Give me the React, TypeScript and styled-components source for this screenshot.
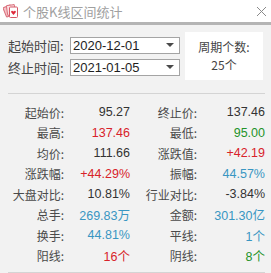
import React from "react";
import styled, { createGlobalStyle } from "styled-components";

const GlobalStyle = createGlobalStyle`
  html, body {
    margin: 0;
    padding: 0;
    background: #f2f2f2;
  }
  body {
    width: 271px;
    height: 273px;
    overflow: hidden;
    font-family: "Liberation Sans", "Noto Sans CJK SC", sans-serif;
  }
`;

const Window = styled.div`
  width: 271px;
  height: 273px;
  background: #f2f2f2;
`;

const TitleBar = styled.div`
  height: 22px;
  display: flex;
  align-items: center;
  padding: 0 4px 0 3px;
  background: #ffffff;
  border-bottom: 3px solid #b4b4b4;
`;

const Title = styled.span`
  margin-left: 4px;
  flex: 1;
  font-family: "Noto Sans CJK SC", sans-serif;
  font-size: 13px;
  color: #a0a0a0;
`;

const TopSection = styled.div`
  display: flex;
  align-items: center;
  padding: 7px 8px 0 8px;
`;

const DateColumn = styled.div`
  display: flex;
  flex-direction: column;
  gap: 5px;
`;

const DateRow = styled.div`
  display: flex;
  align-items: center;
`;

const DateLabel = styled.span`
  width: 62px;
  font-family: "Noto Sans CJK SC", sans-serif;
  font-size: 13px;
  color: #444444;
  line-height: 17px;
`;

const Combo = styled.div`
  width: 101px;
  height: 15px;
  display: flex;
  align-items: center;
  justify-content: space-between;
  padding: 0 5px 0 2px;
  background: #ffffff;
  border: 1px solid #a4a4a4;
  font-size: 13px;
  color: #1e1e1e;
`;

const Arrow = styled.span`
  width: 0;
  height: 0;
  border-left: 4px solid transparent;
  border-right: 4px solid transparent;
  border-top: 4px solid #4a4a4a;
`;

const CountBox = styled.div`
  margin-left: 5px;
  width: 80px;
  height: 48px;
  display: flex;
  flex-direction: column;
  align-items: center;
  justify-content: center;
  background: #ffffff;
  font-family: "Noto Sans CJK SC", sans-serif;
  font-size: 12px;
  line-height: 18px;
  color: #444444;
`;

const Divider = styled.div<{ $top: number }>`
  margin: ${(p) => p.$top}px 6px 0 8px;
  height: 1px;
  background: #d4d4d4;
`;

const StatsGrid = styled.div`
  display: grid;
  grid-template-columns: 56px 66px 67px 68px;
  grid-auto-rows: 20.5px;
  padding: 8px 0 0 8px;
  align-items: center;
`;

const StatLabel = styled.span`
  text-align: right;
  font-family: "Noto Sans CJK SC", sans-serif;
  font-size: 12px;
  color: #4a4a4a;
  white-space: nowrap;
`;

const StatValue = styled.span<{ $tone?: "red" | "green" | "blue" }>`
  text-align: right;
  font-size: 12.5px;
  white-space: nowrap;
  color: ${(p) =>
    p.$tone === "red"
      ? "#d8222a"
      : p.$tone === "green"
      ? "#23932a"
      : p.$tone === "blue"
      ? "#3996c2"
      : "#333333"};
`;

const CardsIcon = () => (
  <svg width="16" height="16" viewBox="0 0 16 16">
    <rect x="1.5" y="3" width="8" height="10" rx="1" fill="#f7c4c9" stroke="#d9707c" transform="rotate(-22 5.5 8)" />
    <rect x="4" y="2" width="8" height="10" rx="1" fill="#fbe0e3" stroke="#d9707c" transform="rotate(-8 8 7)" />
    <rect x="6.5" y="4" width="8" height="10.5" rx="1" fill="#ffffff" stroke="#d65a68" />
    <path d="M10.5 12 L8.4 9.6 C7.7 8.7 8.5 7.4 9.5 7.9 L10.5 8.6 L11.5 7.9 C12.5 7.4 13.3 8.7 12.6 9.6 Z" fill="#e0283a" />
  </svg>
);

const CloseIcon = () => (
  <svg width="11" height="11" viewBox="0 0 11 11">
    <path d="M1 1 L10 10 M10 1 L1 10" stroke="#8a8a8a" strokeWidth="1" />
  </svg>
);

type Stat = {
  label: string;
  value: string;
  tone?: "red" | "green" | "blue";
};

const stats: Stat[][] = [
  [
    { label: "起始价:", value: "95.27" },
    { label: "终止价:", value: "137.46" },
  ],
  [
    { label: "最高:", value: "137.46", tone: "red" },
    { label: "最低:", value: "95.00", tone: "green" },
  ],
  [
    { label: "均价:", value: "111.66" },
    { label: "涨跌值:", value: "+42.19", tone: "red" },
  ],
  [
    { label: "涨跌幅:", value: "+44.29%", tone: "red" },
    { label: "振幅:", value: "44.57%", tone: "blue" },
  ],
  [
    { label: "大盘对比:", value: "10.81%" },
    { label: "行业对比:", value: "-3.84%" },
  ],
  [
    { label: "总手:", value: "269.83万", tone: "blue" },
    { label: "金额:", value: "301.30亿", tone: "blue" },
  ],
  [
    { label: "换手:", value: "44.81%", tone: "blue" },
    { label: "平线:", value: "1个", tone: "blue" },
  ],
  [
    { label: "阳线:", value: "16个", tone: "red" },
    { label: "阴线:", value: "8个", tone: "green" },
  ],
];

export default function App() {
  return (
    <Window>
      <GlobalStyle />
      <TitleBar>
        <CardsIcon />
        <Title>个股K线区间统计</Title>
        <CloseIcon />
      </TitleBar>

      <TopSection>
        <DateColumn>
          <DateRow>
            <DateLabel>起始时间:</DateLabel>
            <Combo>
              2020-12-01
              <Arrow />
            </Combo>
          </DateRow>
          <DateRow>
            <DateLabel>终止时间:</DateLabel>
            <Combo>
              2021-01-05
              <Arrow />
            </Combo>
          </DateRow>
        </DateColumn>
        <CountBox>
          <span>周期个数:</span>
          <span>25个</span>
        </CountBox>
      </TopSection>

      <Divider $top={13} />

      <StatsGrid>
        {stats.map((row) =>
          row.map((s) => (
            <React.Fragment key={s.label}>
              <StatLabel>{s.label}</StatLabel>
              <StatValue $tone={s.tone}>{s.value}</StatValue>
            </React.Fragment>
          ))
        )}
      </StatsGrid>

      <Divider $top={6} />
    </Window>
  );
}
